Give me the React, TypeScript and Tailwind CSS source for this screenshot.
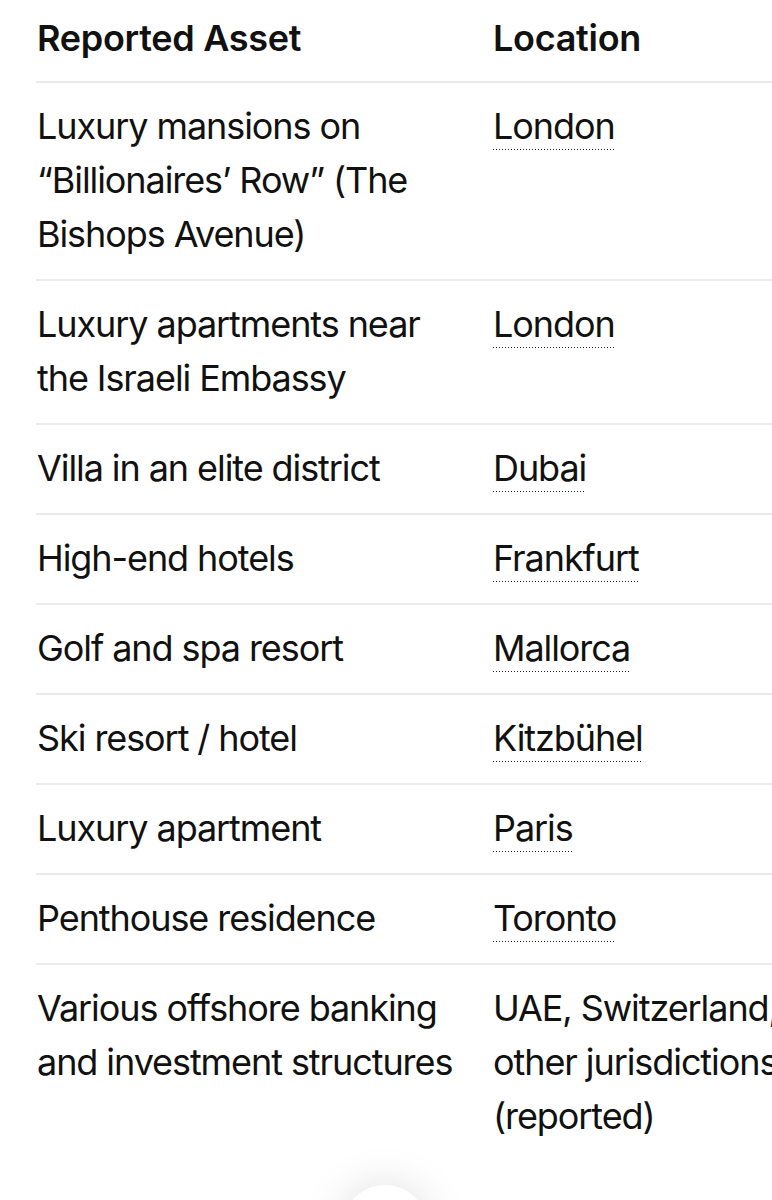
import React from "react";

const rows: { asset: string[]; loc: string[] | null; plain?: string[] }[] = [
  { asset: ["Luxury mansions on", "“Billionaires’ Row” (The", "Bishops Avenue)"], loc: ["London"] },
  { asset: ["Luxury apartments near", "the Israeli Embassy"], loc: ["London"] },
  { asset: ["Villa in an elite district"], loc: ["Dubai"] },
  { asset: ["High-end hotels"], loc: ["Frankfurt"] },
  { asset: ["Golf and spa resort"], loc: ["Mallorca"] },
  { asset: ["Ski resort / hotel"], loc: ["Kitzbühel"] },
  { asset: ["Luxury apartment"], loc: ["Paris"] },
  { asset: ["Penthouse residence"], loc: ["Toronto"] },
  {
    asset: ["Various offshore banking", "and investment structures"],
    loc: null,
    plain: ["UAE, Switzerland,", "other jurisdictions", "(reported)"],
  },
];

function Lines({ lines }: { lines: string[] }) {
  return (
    <>
      {lines.map((l, i) => (
        <div key={i} className="whitespace-nowrap">
          {l}
        </div>
      ))}
    </>
  );
}

export default function App() {
  return (
    <div
      className="relative w-[772px] h-[1200px] overflow-hidden bg-white text-[#111] text-[36px] leading-[54px] tracking-[-0.03em]"
      style={{ fontFamily: "Inter, 'Noto Sans', 'Liberation Sans', sans-serif" }}
    >
      <div className="ml-[36px] w-[900px]">
        <div className="grid grid-cols-[457px_1fr] pt-[11px] pb-[16px] font-semibold tracking-[-0.008em]">
          <div className="pl-[1px]">Reported Asset</div>
          <div>Location</div>
        </div>
        {rows.map((r, i) => (
          <div
            key={i}
            className="grid grid-cols-[457px_1fr] border-t-2 border-[#ebebeb] pt-[16px] pb-[18px]"
          >
            <div className="pl-[1px]">
              <Lines lines={r.asset} />
            </div>
            <div>
              {r.loc ? (
                <span className="pb-[2px] bg-[linear-gradient(to_right,#222_1px,transparent_1px)] bg-[length:3px_1px] bg-repeat-x bg-[position:0_100%]">
                  {r.loc[0]}
                </span>
              ) : (
                <Lines lines={r.plain || []} />
              )}
            </div>
          </div>
        ))}
      </div>
      <div className="absolute left-[342px] top-[1185px] w-[86px] h-[86px] rounded-full bg-white shadow-[0_0_44px_rgba(0,0,0,0.13)]" />
    </div>
  );
}
